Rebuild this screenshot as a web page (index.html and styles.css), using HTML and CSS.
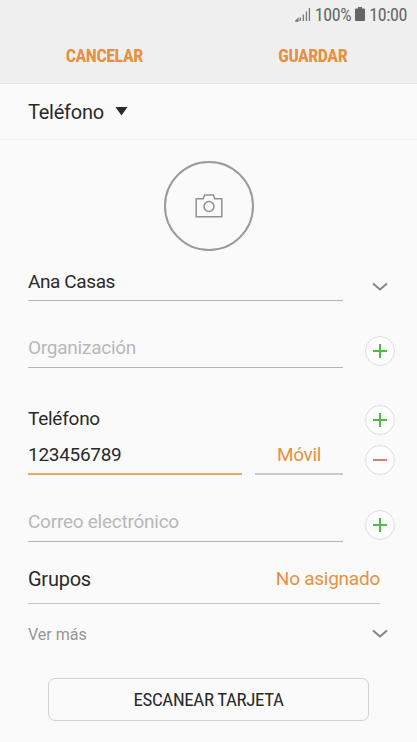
FILE: index.html
```html
<!DOCTYPE html>
<html lang="es">

  <head>
    <meta charset="UTF-8">
    <meta name="viewport" content="width=device-width, initial-scale=1.0">
    <title>Contacto</title>

    <link rel="stylesheet" href="styles.css">
  </head>

  <body>

    <header>
      <div class="status">
        <svg class="signal" width="16" height="15" viewBox="0 0 16 15">
          <path d="M.8 14h2.200v-2.200zM5.200 14v-3.500M8.300 14V7.500M11.400 14V4.500M14.400 14V1" />
        </svg>
        <span class="battery-level">100%</span>
        <svg class="battery" width="10" height="14" viewBox="0 0 10 14">
          <path d="M3 0h4v1.500h2.200q.8 0 .8.8V13q0 1-1 1H1q-1 0-1-1V2.300q0-.8.8-.8H3z" />
        </svg>
        <span class="clock">10:00</span>
      </div>
      <nav class="actions">
        <button type="button" class="cancel">CANCELAR</button>
        <button type="button" class="save">GUARDAR</button>
      </nav>
    </header>

    <div class="account">
      <span>Teléfono</span>
      <svg width="13" height="9" viewBox="0 0 13 9">
        <path d="M.5 0h12l-6 8.500z" />
      </svg>
    </div>

    <form>
      <button type="button" class="photo" aria-label="Foto">
        <svg width="28" height="24" viewBox="0 0 28 24">
          <path d="M1.200 4.700h7L9.600 1h8.800l1.400 3.700h7V22.700H1.200z" />
          <circle cx="14" cy="12.500" r="5" />
        </svg>
      </button>

      <div class="row name">
        <input class="field" type="text" value="Ana Casas" aria-label="Nombre">
        <svg class="chevron" width="16" height="10" viewBox="0 0 16 10">
          <path d="M1 1.500l7 6 7-6" />
        </svg>
      </div>

      <div class="row organization">
        <input class="field" type="text" placeholder="Organización">
        <button type="button" class="round add" aria-label="Añadir organización">
          <svg width="14" height="14" viewBox="0 0 14 14"><path d="M0 7h14M7 0v14" /></svg>
        </button>
      </div>

      <div class="row phone-title">
        <label for="phone">Teléfono</label>
        <button type="button" class="round add" aria-label="Añadir teléfono">
          <svg width="14" height="14" viewBox="0 0 14 14"><path d="M0 7h14M7 0v14" /></svg>
        </button>
      </div>

      <div class="row phone">
        <input class="field number" type="text" id="phone" value="123456789">
        <button type="button" class="field kind">Móvil</button>
        <button type="button" class="round remove" aria-label="Quitar teléfono">
          <svg width="14" height="14" viewBox="0 0 14 14"><path d="M0 7h14" /></svg>
        </button>
      </div>

      <div class="row email">
        <input class="field" type="text" placeholder="Correo electrónico">
        <button type="button" class="round add" aria-label="Añadir correo">
          <svg width="14" height="14" viewBox="0 0 14 14"><path d="M0 7h14M7 0v14" /></svg>
        </button>
      </div>

      <div class="groups">
        <span class="title">Grupos</span>
        <span class="value">No asignado</span>
      </div>

      <div class="more">
        <span>Ver más</span>
        <svg class="chevron" width="16" height="10" viewBox="0 0 16 10">
          <path d="M1 1.500l7 6 7-6" />
        </svg>
      </div>

      <button type="button" class="scan">ESCANEAR TARJETA</button>
    </form>

  </body>

</html>
```
FILE: styles.css
```css
* {
  margin: 0;
  padding: 0;
  box-sizing: border-box;
}

body {
  height: 742px;
  overflow: hidden;
  background-color: #fafafa;
  color: #2a2a2a;
  font-family: Roboto, "Liberation Sans", sans-serif;
  font-size: 19px;
  letter-spacing: -0.25px;
}

button,
input {
  border: none;
  background: none;
  color: inherit;
  font: inherit;
  letter-spacing: inherit;
  outline: none;
}

svg {
  display: block;
  flex: none;
  fill: none;
}

header {
  height: 84px;
  background-color: #efefef;
  border-bottom: 1px solid #e6e6e6;
}

.status {
  display: flex;
  align-items: center;
  justify-content: flex-end;
  height: 28px;
  padding-right: 10px;
  color: #666;
  font-family: "Roboto Condensed", Roboto, sans-serif;
  font-stretch: 75%;
  font-size: 18px;
  letter-spacing: -0.4px;

  & .signal {
    margin-right: 4px;
    stroke: #777;
    stroke-width: 1.3;
  }

  & .battery {
    margin: 0 4px 0 4px;
    fill: #666;
  }
}

.actions {
  display: grid;
  grid-template-columns: 1fr 1fr;
  height: 55px;

  & button {
    color: #e8903f;
    font-family: "Roboto Condensed", Roboto, sans-serif;
    font-stretch: 75%;
    font-size: 18px;
    font-weight: bold;
    letter-spacing: -0.45px;
  }
}

.account {
  display: flex;
  align-items: center;
  gap: 11px;
  height: 56px;
  padding-left: 28px;
  border-bottom: 1px solid #efefef;
  font-size: 20px;

  & svg {
    fill: #2a2a2a;
  }
}

form {
  padding: 21px 22px 0 28px;
}

.photo {
  display: grid;
  place-items: center;
  width: 90px;
  height: 90px;
  margin-left: 136px;
  border: 2px solid #9a9a9a;
  border-radius: 50%;

  & svg {
    stroke: #919191;
    stroke-width: 1.5;
  }
}

.row {
  display: flex;
  align-items: flex-end;
  justify-content: space-between;
}

.field {
  width: 315px;
  height: 36px;
  padding-bottom: 2px;
  border-bottom: 1px solid #b5b5b5;
}

.field::placeholder {
  color: #b8b8b8;
}

.chevron {
  stroke: #858585;
  stroke-width: 2;
}

.round {
  display: grid;
  place-items: center;
  width: 30px;
  height: 30px;
  border: 1px solid #dedede;
  border-radius: 50%;
  background-color: #fdfdfd;

  & svg {
    stroke-width: 2;
  }
}

.add svg {
  stroke: #4fbd45;
}

.remove svg {
  stroke: #df7c7c;
}

.name {
  height: 50px;
  letter-spacing: -0.4px;

  & .chevron {
    margin: 0 7px 9px 0;
  }
}

.organization,
.email {
  height: 67px;

  & .field {
    padding-bottom: 5px;
  }

  & .round {
    margin-bottom: 2px;
  }
}

.phone-title {
  height: 30px;
  margin-top: 37px;

  & label {
    margin-bottom: 5px;
  }
}

.phone {
  height: 40px;
  letter-spacing: -0.3px;

  & .field {
    height: 39px;
    padding-bottom: 0;
    border-bottom-width: 2px;
    border-color: #cacaca;
  }

  & .number {
    width: 214px;
    border-color: #eca766;
  }

  & .kind {
    width: 88px;
    margin-right: 9px;
    color: #e8903f;
  }
}

.groups {
  display: flex;
  align-items: center;
  justify-content: space-between;
  width: 352px;
  height: 62px;
  padding-top: 12px;
  border-bottom: 1px solid #c3c3c3;

  & .title {
    font-size: 20px;
  }

  & .value {
    color: #e8903f;
  }
}

.more {
  display: flex;
  align-items: center;
  justify-content: space-between;
  height: 60px;
  padding-right: 7px;
  color: #969696;
  font-size: 16px;
  letter-spacing: 0;
}

.scan {
  display: block;
  width: 321px;
  height: 43px;
  margin: 14px 0 0 20px;
  border: 1px solid #d2d2d2;
  border-radius: 7px;
  font-family: "Roboto Condensed", Roboto, sans-serif;
  font-stretch: 75%;
  letter-spacing: -0.4px;
}
```
